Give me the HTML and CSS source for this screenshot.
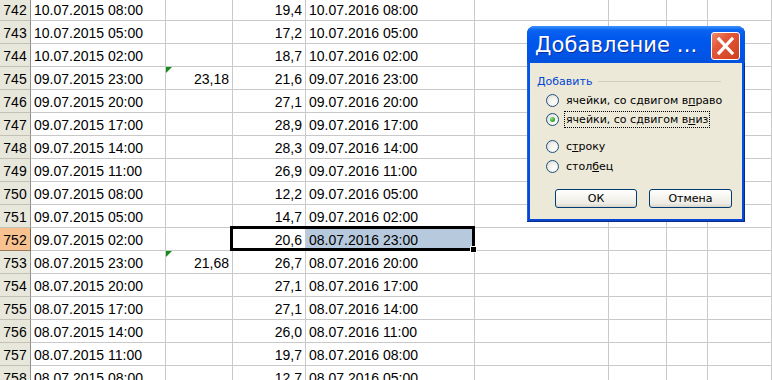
FILE: index.html
```html
<!DOCTYPE html>
<html lang="ru">
<head>
<meta charset="utf-8">
<title>Excel</title>
<link rel="stylesheet" href="styles.css">
</head>
<body>
<div class="sheet">
  <div class="row"><div class="hd">742</div><div class="c">10.07.2015 08:00</div><div class="c num"></div><div class="c num">19,4</div><div class="c">10.07.2016 08:00</div><div class="c"></div><div class="c"></div><div class="c"></div><div class="c"></div></div>
  <div class="row"><div class="hd">743</div><div class="c">10.07.2015 05:00</div><div class="c num"></div><div class="c num">17,2</div><div class="c">10.07.2016 05:00</div><div class="c"></div><div class="c"></div><div class="c"></div><div class="c"></div></div>
  <div class="row"><div class="hd">744</div><div class="c">10.07.2015 02:00</div><div class="c num"></div><div class="c num">18,7</div><div class="c">10.07.2016 02:00</div><div class="c"></div><div class="c"></div><div class="c"></div><div class="c"></div></div>
  <div class="row"><div class="hd">745</div><div class="c">09.07.2015 23:00</div><div class="c num flag">23,18</div><div class="c num">21,6</div><div class="c">09.07.2016 23:00</div><div class="c"></div><div class="c"></div><div class="c"></div><div class="c"></div></div>
  <div class="row"><div class="hd">746</div><div class="c">09.07.2015 20:00</div><div class="c num"></div><div class="c num">27,1</div><div class="c">09.07.2016 20:00</div><div class="c"></div><div class="c"></div><div class="c"></div><div class="c"></div></div>
  <div class="row"><div class="hd">747</div><div class="c">09.07.2015 17:00</div><div class="c num"></div><div class="c num">28,9</div><div class="c">09.07.2016 17:00</div><div class="c"></div><div class="c"></div><div class="c"></div><div class="c"></div></div>
  <div class="row"><div class="hd">748</div><div class="c">09.07.2015 14:00</div><div class="c num"></div><div class="c num">28,3</div><div class="c">09.07.2016 14:00</div><div class="c"></div><div class="c"></div><div class="c"></div><div class="c"></div></div>
  <div class="row"><div class="hd">749</div><div class="c">09.07.2015 11:00</div><div class="c num"></div><div class="c num">26,9</div><div class="c">09.07.2016 11:00</div><div class="c"></div><div class="c"></div><div class="c"></div><div class="c"></div></div>
  <div class="row"><div class="hd">750</div><div class="c">09.07.2015 08:00</div><div class="c num"></div><div class="c num">12,2</div><div class="c">09.07.2016 05:00</div><div class="c"></div><div class="c"></div><div class="c"></div><div class="c"></div></div>
  <div class="row"><div class="hd">751</div><div class="c">09.07.2015 05:00</div><div class="c num"></div><div class="c num">14,7</div><div class="c">09.07.2016 02:00</div><div class="c"></div><div class="c"></div><div class="c"></div><div class="c"></div></div>
  <div class="row"><div class="hd hd-sel">752</div><div class="c">09.07.2015 02:00</div><div class="c num"></div><div class="c num active">20,6<span class="selbox"><span class="handle"></span></span></div><div class="c selected">08.07.2016 23:00</div><div class="c"></div><div class="c"></div><div class="c"></div><div class="c"></div></div>
  <div class="row"><div class="hd">753</div><div class="c">08.07.2015 23:00</div><div class="c num flag">21,68</div><div class="c num">26,7</div><div class="c">08.07.2016 20:00</div><div class="c"></div><div class="c"></div><div class="c"></div><div class="c"></div></div>
  <div class="row"><div class="hd">754</div><div class="c">08.07.2015 20:00</div><div class="c num"></div><div class="c num">27,1</div><div class="c">08.07.2016 17:00</div><div class="c"></div><div class="c"></div><div class="c"></div><div class="c"></div></div>
  <div class="row"><div class="hd">755</div><div class="c">08.07.2015 17:00</div><div class="c num"></div><div class="c num">27,1</div><div class="c">08.07.2016 14:00</div><div class="c"></div><div class="c"></div><div class="c"></div><div class="c"></div></div>
  <div class="row"><div class="hd">756</div><div class="c">08.07.2015 14:00</div><div class="c num"></div><div class="c num">26,0</div><div class="c">08.07.2016 11:00</div><div class="c"></div><div class="c"></div><div class="c"></div><div class="c"></div></div>
  <div class="row"><div class="hd">757</div><div class="c">08.07.2015 11:00</div><div class="c num"></div><div class="c num">19,7</div><div class="c">08.07.2016 08:00</div><div class="c"></div><div class="c"></div><div class="c"></div><div class="c"></div></div>
  <div class="row"><div class="hd">758</div><div class="c">08.07.2015 08:00</div><div class="c num"></div><div class="c num">12,7</div><div class="c">08.07.2016 05:00</div><div class="c"></div><div class="c"></div><div class="c"></div><div class="c"></div></div>
</div>

<div class="dialog">
  <div class="titlebar">
    <span class="title">Добавление ...</span>
    <span class="close"><svg width="27" height="26" viewBox="0 0 27 26"><path d="M7 6 L20 20 M20 6 L7 20" stroke="#fff" stroke-width="3.2" stroke-linecap="square" fill="none"/></svg></span>
  </div>
  <div class="body">
    <div class="group"><span class="legend">Добавить</span><span class="rule"></span></div>
    <div class="radio r1"><span class="dot"></span><span class="lbl">ячейки, со сдвигом в<u>п</u>раво</span></div>
    <div class="radio r2"><span class="dot on"></span><span class="lbl focus">ячейки, со сдвигом в<u>н</u>из</span></div>
    <div class="radio r3"><span class="dot"></span><span class="lbl">с<u>т</u>року</span></div>
    <div class="radio r4"><span class="dot"></span><span class="lbl">стол<u>б</u>ец</span></div>
    <div class="buttons"><span class="btn ok">ОК</span><span class="btn cancel">Отмена</span></div>
  </div>
</div>
</body>
</html>
```
FILE: styles.css
```css
html, body {
  margin: 0;
  padding: 0;
  background: #fff;
  overflow: hidden;
  width: 772px;
  height: 380px;
}

.sheet {
  margin-top: -2px;
  font-family: "Liberation Sans", Arial, sans-serif;
  font-size: 14px;
  color: #000;
}

.row {
  display: grid;
  grid-template-columns: 31px 135px 67px 73px 169px 134px 58px 41px 1fr;
  height: 23px;
}

.row > div {
  box-sizing: border-box;
  height: 23px;
  border-right: 1px solid #c9c9c9;
  border-bottom: 1px solid #c9c9c9;
  line-height: 20px;
  padding: 2px 3px 0 3px;
  white-space: nowrap;
}

.row > .hd {
  background: #e8e7dc;
  border-right: 1px solid #8f8f86;
  border-bottom: 1px solid #c2c1b3;
  text-align: center;
  padding: 2px 0 0 0;
}

.row > .hd-sel {
  background: #f8c190;
  border-bottom: 1px solid #9a7a5c;
  border-right: 1px solid #7a6a5a;
}

.num {
  text-align: right;
}

.flag {
  position: relative;
}

.flag::before {
  content: "";
  position: absolute;
  left: 0;
  top: 0;
  border-top: 6px solid #168c16;
  border-right: 6px solid transparent;
}

.active {
  position: relative;
}

.row > .selected {
  background: #b7cadd;
}

.selbox {
  position: absolute;
  left: -3px;
  top: -2px;
  width: 245px;
  height: 25px;
  box-sizing: border-box;
  border: 3px solid #000;
  z-index: 2;
}

.handle {
  position: absolute;
  right: -5px;
  bottom: -5px;
  width: 5px;
  height: 5px;
  background: #000;
  border: 1px solid #fff;
}

/* Dialog */
.dialog {
  position: absolute;
  left: 527px;
  top: 26px;
  width: 218px;
  height: 196px;
  box-sizing: border-box;
  border-radius: 8px 8px 0 0;
  background: linear-gradient(#2f7cf6 0, #0058ee 12px, #0053e6 60%, #0846cf 100%);
  box-shadow: inset -1px -1px 0 #0a2a8a, inset 1px 0 0 #1f5fd8;
  display: flex;
  flex-direction: column;
  font-family: "DejaVu Sans", Verdana, sans-serif;
  font-size: 11px;
  z-index: 5;
}

.titlebar {
  height: 37px;
  display: flex;
  align-items: center;
  justify-content: space-between;
  padding: 0 5px 0 8px;
  border-radius: 8px 8px 0 0;
  background: linear-gradient(#3d95ff 0, #0a64f0 4px, #0058ee 12px, #0055e9 26px, #0451dc 37px);
}

.title {
  color: #fff;
  font-size: 21px;
  letter-spacing: 0.1px;
  text-shadow: 1px 1px 0 #0a2f9a;
  margin-top: 0;
}

.close {
  width: 27px;
  height: 26px;
  border: 1px solid #fff;
  border-radius: 3px;
  background: linear-gradient(135deg, #f08a6c 0, #e2583a 35%, #cf3f1c 100%);
  display: flex;
  margin-top: 2px;
}

.body {
  flex: 1;
  margin: 0 3px 3px 3px;
  background: #ece9d8;
  display: flex;
  flex-direction: column;
  padding: 12px 0 0 0;
  color: #000;
}

.group {
  display: flex;
  align-items: center;
  height: 13px;
  padding-left: 7px;
}

.legend {
  color: #0046d5;
  line-height: 13px;
}

.rule {
  flex: 0 0 123px;
  height: 1px;
  background: #d0d0bf;
  margin-left: 6px;
}

.radio {
  display: flex;
  align-items: center;
  height: 19px;
  padding-left: 16px;
}

.r1 { margin-top: 3px; }
.r3 { margin-top: 7px; height: 20px; }
.r4 { margin-top: 0; height: 20px; }

.dot {
  width: 11px;
  height: 11px;
  border: 1px solid #1c5180;
  border-radius: 50%;
  background: radial-gradient(circle at 65% 65%, #ffffff 0, #f4f3ee 40%, #d8d6cc 100%);
  flex: none;
  display: flex;
  align-items: center;
  justify-content: center;
}

.dot.on::after {
  content: "";
  width: 5px;
  height: 5px;
  border-radius: 50%;
  background: radial-gradient(circle at 35% 35%, #8ee28e 0, #2fa52f 60%, #1e8a1e 100%);
}

.lbl {
  margin-left: 5px;
  padding: 0 1px;
  line-height: 15px;
  border: 1px dotted transparent;
}

.lbl.focus {
  border: 1px dotted #000;
}

.buttons {
  display: flex;
  margin-top: 13px;
  padding-left: 25px;
  gap: 12px;
}

.btn {
  box-sizing: border-box;
  height: 19px;
  border: 1px solid #003c74;
  border-radius: 3px;
  background: linear-gradient(#ffffff 0, #f6f5f0 40%, #ecebe4 80%, #d8d3c7 100%);
  display: flex;
  align-items: center;
  justify-content: center;
  line-height: 15px;
}

.ok { width: 82px; }
.cancel { width: 83px; }
```
